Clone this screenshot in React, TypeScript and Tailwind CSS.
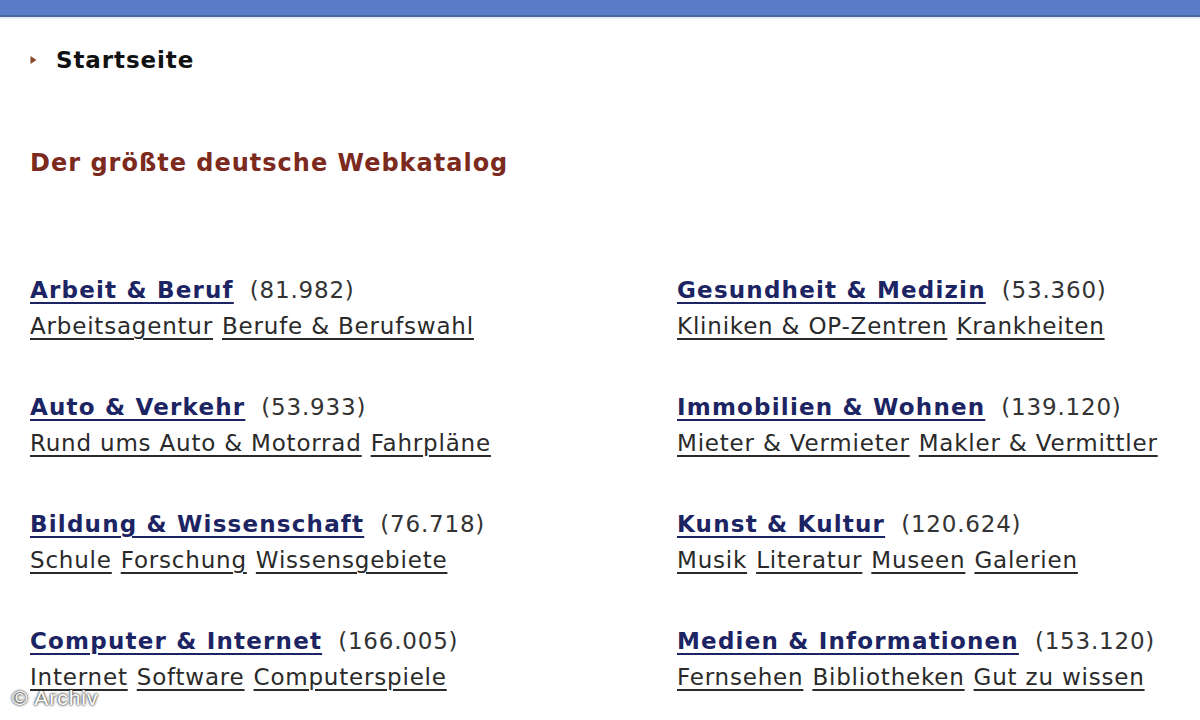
const CATEGORIES = [
  { title: 'Arbeit & Beruf', count: '(81.982)', links: ['Arbeitsagentur', 'Berufe & Berufswahl'] },
  { title: 'Gesundheit & Medizin', count: '(53.360)', links: ['Kliniken & OP-Zentren', 'Krankheiten'] },
  { title: 'Auto & Verkehr', count: '(53.933)', links: ['Rund ums Auto & Motorrad', 'Fahrpläne'] },
  { title: 'Immobilien & Wohnen', count: '(139.120)', links: ['Mieter & Vermieter', 'Makler & Vermittler'] },
  { title: 'Bildung & Wissenschaft', count: '(76.718)', links: ['Schule', 'Forschung', 'Wissensgebiete'] },
  { title: 'Kunst & Kultur', count: '(120.624)', links: ['Musik', 'Literatur', 'Museen', 'Galerien'] },
  { title: 'Computer & Internet', count: '(166.005)', links: ['Internet', 'Software', 'Computerspiele'] },
  { title: 'Medien & Informationen', count: '(153.120)', links: ['Fernsehen', 'Bibliotheken', 'Gut zu wissen'] },
];

function Category({ title, count, links }: { title: string; count: string; links: string[] }) {
  return (
    <div className="flex flex-col gap-[6px]">
      <div className="flex items-baseline gap-[16px] leading-[30px]">
        <a
          href="#"
          className="font-bold tracking-[1.2px] text-[#1c2463] underline decoration-[2px] underline-offset-[4px]"
        >
          {title}
        </a>
        <span className="tracking-[0.8px] text-[#333]">{count}</span>
      </div>
      <div className="flex items-baseline gap-[9px] leading-[30px] tracking-[0.8px] text-[#2a2a2a]">
        {links.map((l) => (
          <a key={l} href="#" className="underline decoration-[2px] underline-offset-[4px]">
            {l}
          </a>
        ))}
      </div>
    </div>
  );
}

export default function App() {
  return (
    <div
      className="relative h-[720px] w-[1200px] overflow-hidden bg-white text-[23px]"
      style={{ fontFamily: '"DejaVu Sans", Verdana, sans-serif' }}
    >
      <div className="h-[17px] border-b-2 border-[#4a64a2] bg-[#5a7cc6]" />
      <div className="h-[3px] bg-gradient-to-b from-[#dde6f4] to-white" />

      <div className="flex items-center gap-[19px] pl-[30px] pt-[25px] leading-[30px]">
        <svg width="7" height="10" viewBox="0 0 7 10">
          <path d="M0.5 1 L6.5 5 L0.5 9 Z" fill="#8a4a2a" />
        </svg>
        <span className="font-bold tracking-[0.9px] text-[#111]">Startseite</span>
      </div>

      <h1 className="mt-[73px] pl-[30px] text-[24px] font-bold leading-[30px] tracking-[1px] text-[#7b2a1d]">
        Der größte deutsche Webkatalog
      </h1>

      <div className="grid grid-cols-[647px_1fr] gap-y-[51px] pl-[30px] pt-[97px]">
        {CATEGORIES.map((c) => (
          <Category key={c.title} {...c} />
        ))}
      </div>

      <div
        className="absolute bottom-[10px] left-[12px] text-[21px] leading-[24px] tracking-[1px] text-white"
        style={{ fontFamily: '"Liberation Sans", Arial, sans-serif', textShadow: '0 0 3px #333, 0 0 2px #333' }}
      >
        © Archiv
      </div>
    </div>
  );
}
